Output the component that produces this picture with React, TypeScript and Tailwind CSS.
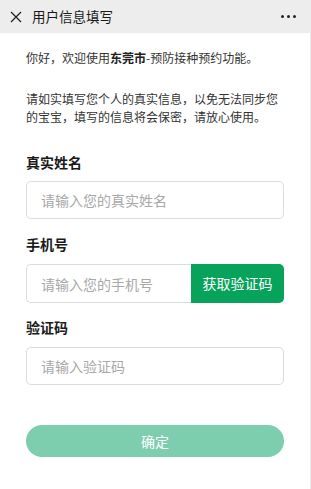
import type { JSX } from 'react';

const font = { fontFamily: '"Noto Sans CJK SC", "Noto Sans", sans-serif' };

const Field = ({ placeholder }: { placeholder: string }): JSX.Element => (
  <input
    placeholder={placeholder}
    className="h-[38px] w-full rounded-[5px] border border-[#dcdcdc] bg-white pl-[14px] text-[14px] text-[#333] outline-none placeholder:text-[#a8a8a8]"
  />
);

export default function App(): JSX.Element {
  return (
    <div className="flex h-[489px] w-[311px] flex-col bg-white" style={font}>
      <div className="flex h-[33px] items-center bg-[#ededed] pl-[10px] pr-[15px]">
        <svg width="12" height="12" viewBox="0 0 12 12" className="mr-[10px]">
          <path d="M1 1 L11 11 M11 1 L1 11" stroke="#222" strokeWidth="1.3" />
        </svg>
        <span className="text-[13.5px] leading-none text-[#1a1a1a]">用户信息填写</span>
        <div className="ml-auto flex gap-[3px]">
          <span className="h-[3px] w-[3px] rounded-full bg-[#222]" />
          <span className="h-[3px] w-[3px] rounded-full bg-[#222]" />
          <span className="h-[3px] w-[3px] rounded-full bg-[#222]" />
        </div>
      </div>

      <div className="flex flex-1 flex-col border-r border-[#ececec] pl-[26px] pr-[26px] pt-[16px]">
        <p className="text-[12px] leading-[18px] text-[#333]">
          你好，欢迎使用<span className="font-bold text-[#222]">东莞市</span>-预防接种预约功能。
        </p>
        <p className="mt-[23px] text-[12px] leading-[18px] text-[#333]">
          请如实填写您个人的真实信息，以免无法同步您的宝宝，填写的信息将会保密，请放心使用。
        </p>

        <div className="mt-[26px] text-[14px] font-bold leading-[20px] text-[#1a1a1a]">真实姓名</div>
        <div className="mt-[9px]">
          <Field placeholder="请输入您的真实姓名" />
        </div>

        <div className="mt-[15px] text-[14px] font-bold leading-[20px] text-[#1a1a1a]">手机号</div>
        <div className="mt-[10px] flex h-[39px]">
          <input
            placeholder="请输入您的手机号"
            className="h-full w-[165px] rounded-l-[5px] border border-r-0 border-[#dcdcdc] bg-white pl-[14px] text-[14px] outline-none placeholder:text-[#a8a8a8]"
          />
          <button className="flex h-full flex-1 items-center justify-center rounded-r-[5px] bg-[#07a35a] text-[14px] text-white">
            获取验证码
          </button>
        </div>

        <div className="mt-[14px] text-[14px] font-bold leading-[20px] text-[#1a1a1a]">验证码</div>
        <div className="mt-[10px]">
          <Field placeholder="请输入验证码" />
        </div>

        <button className="mt-[40px] flex h-[32px] w-full items-center justify-center rounded-full bg-[#7dcdaf] text-[14px] text-white">
          确定
        </button>
      </div>
    </div>
  );
}
